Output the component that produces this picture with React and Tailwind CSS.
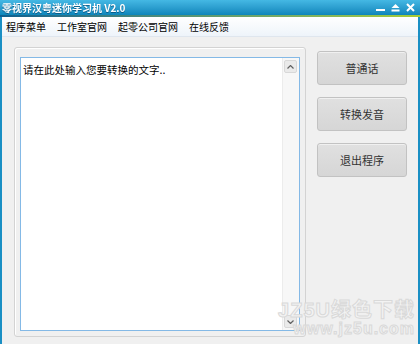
export default function App() {
  const menus = ['程序菜单', '工作室官网', '起零公司官网', '在线反馈'];
  const buttons = [
    { label: '普通话', mt: 'mt-[4px]' },
    { label: '转换发音', mt: 'mt-[12px]' },
    { label: '退出程序', mt: 'mt-[12px]' },
  ];

  return (
    <div
      className="w-[420px] h-[344px] overflow-hidden relative flex flex-col bg-[#f0f0f0] text-[12px] text-black"
      style={{ fontFamily: '"Noto Sans CJK SC", "Liberation Sans", sans-serif' }}
    >
      {/* title bar */}
      <div className="h-[15px] flex items-center justify-between bg-gradient-to-b from-[#44b8e4] to-[#0b86bb] px-[2px]">
        <span className="text-white font-bold text-[10px] leading-none drop-shadow-[0_1px_0_rgba(0,60,100,0.6)]">
          零视界汉粤迷你学习机 V2.0
        </span>
        <div className="flex items-center gap-[6px] pr-[3px] text-white">
          <svg width="9" height="9" viewBox="0 0 9 9"><rect x="0" y="6" width="9" height="2" fill="#fff" /></svg>
          <svg width="9" height="9" viewBox="0 0 9 9"><path d="M4.5 1 L8.5 5 L0.5 5 Z" fill="#fff" /><rect x="0.5" y="6.5" width="8" height="2" fill="#fff" /></svg>
          <svg width="9" height="9" viewBox="0 0 9 9"><path d="M1 1 L8 8 M8 1 L1 8" stroke="#fff" strokeWidth="2" /></svg>
        </div>
      </div>
      <div className="h-[2px] bg-gradient-to-r from-[#0e5f8e] via-[#5f9a70] to-[#a6cc32]" />

      <div className="flex-1 flex flex-col border-x-[2px] border-[#1a8fc4]">
        {/* menu bar */}
        <div className="h-[20px] flex items-center gap-[11px] pl-[4px] bg-gradient-to-b from-white to-[#eef4fa] border-b border-[#dfe6ee]">
          {menus.map((m) => (
            <span key={m} className="leading-none text-[10px]">{m}</span>
          ))}
        </div>

        {/* body */}
        <div className="flex-1 flex pl-[12px] pt-[10px] pb-[5px]">
          <div className="w-[292px] h-[290px] border border-[#d3d3d3] rounded-[3px] pl-[5px] pt-[9px] shadow-[inset_1px_1px_0_#fff]">
            <div className="w-[280px] h-[274px] border border-[#84b9e6] bg-white flex">
              <div className="flex-1 pl-[2px] pt-[4px] text-[10.5px] leading-[16px]">请在此处输入您要转换的文字..</div>
              <div className="w-[17px] flex flex-col justify-between bg-[#f7f7f7] border-l border-[#ececec] py-[2px] pr-[1px]">
                <div className="h-[13px] mx-[1px] flex items-center justify-center bg-[#eaeaea] border border-[#d8d8d8] rounded-[2px]">
                  <svg width="7" height="4" viewBox="0 0 7 4"><path d="M0.5 3.5 L3.5 0.5 L6.5 3.5" stroke="#606060" fill="none" strokeWidth="1.2" /></svg>
                </div>
                <div className="h-[13px] mx-[1px] flex items-center justify-center bg-[#eaeaea] border border-[#d8d8d8] rounded-[2px]">
                  <svg width="7" height="4" viewBox="0 0 7 4"><path d="M0.5 0.5 L3.5 3.5 L6.5 0.5" stroke="#606060" fill="none" strokeWidth="1.2" /></svg>
                </div>
              </div>
            </div>
          </div>

          <div className="flex flex-col ml-[11px]">
            {buttons.map((b) => (
              <button
                key={b.label}
                className={`${b.mt} w-[90px] h-[34px] rounded-[3px] border border-[#c2c2c2] bg-gradient-to-b from-[#e0e0e0] to-[#d6d6d6] shadow-[inset_0_1px_0_#f0f0f0] text-[11px] text-[#333]`}
              >
                {b.label}
              </button>
            ))}
          </div>
        </div>
      </div>

      {/* watermark */}
      <div className="absolute right-[5px] bottom-[7px] flex flex-col items-end leading-none pointer-events-none">
        <span
          className="text-[20px] font-bold tracking-[1px] text-[#f3f3f3] [-webkit-text-stroke:1px_#d9d9d9]"
          style={{ fontFamily: '"Liberation Sans", "Noto Sans CJK SC", sans-serif' }}
        >
          JZ5U绿色下载
        </span>
        <span
          className="text-[16px] font-bold tracking-[1px] text-[#f3f3f3] [-webkit-text-stroke:1px_#d9d9d9] mt-[1px]"
          style={{ fontFamily: '"Liberation Sans", sans-serif' }}
        >
          www.jz5u.com
        </span>
      </div>
    </div>
  );
}
